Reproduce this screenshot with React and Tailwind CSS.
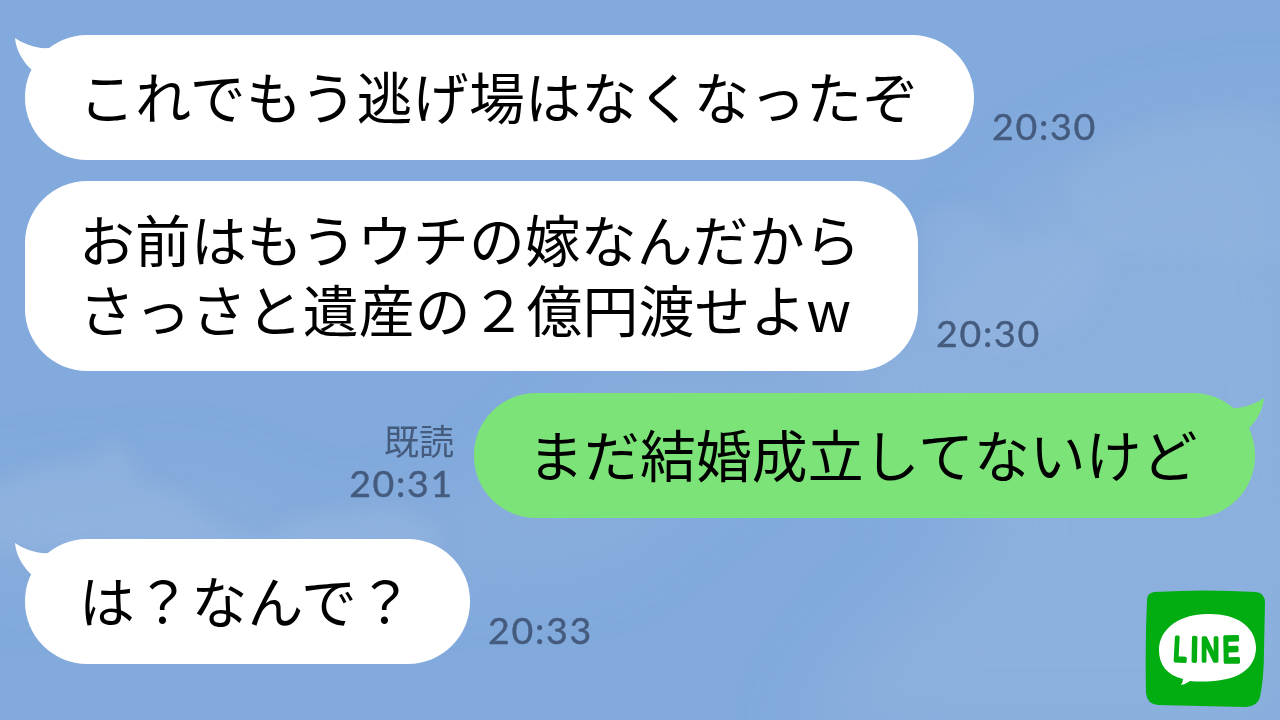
import React from 'react';
import clsx from 'clsx';

const messages = [
  { lines: ['これでもう逃げ場はなくなったぞ'], time: '20:30', tail: 'top-[3px]', width: 'w-[949px]', height: 'h-[125px]', timePad: 'pb-[15px]', tracking: 'tracking-[0.4px]' },
  { lines: ['お前はもうウチの嫁なんだから', 'さっさと遺産の２億円渡せよw'], time: '20:30', width: 'w-[893px]', height: 'h-[190px]', timePad: 'pb-[19px]', tracking: 'tracking-[0.15px]' },
  { lines: ['まだ結婚成立してないけど'], time: '20:31', mine: true, read: true, tail: 'top-[5px]', width: 'w-[781px]', height: 'h-[125px]', timePad: 'pb-[16px]', offset: 'mt-px', tracking: 'tracking-[0.15px]' },
  { lines: ['は？なんで？'], time: '20:33', tail: 'top-[4px]', width: 'w-[445px]', height: 'h-[125px]', timePad: 'pb-[15px]', tracking: 'tracking-[0.4px]' },
];

const Sky = () => (
  <svg className="absolute inset-0 w-full h-full" viewBox="0 0 1280 720" preserveAspectRatio="none">
    <defs>
      <filter id="soft" x="-20%" y="-20%" width="140%" height="140%">
        <feGaussianBlur stdDeviation="9" />
      </filter>
      <filter id="softer" x="-30%" y="-30%" width="160%" height="160%">
        <feGaussianBlur stdDeviation="36" />
      </filter>
    </defs>
    <rect width="1280" height="720" fill="#82aadc" />
    <g fill="#92b3de" filter="url(#softer)">
      <path d="M1030 190 L1140 130 L1300 110 L1320 560 L1300 740 L800 740 L860 650 L1000 520 L780 380 L930 300 Z" opacity=".65" />
      <path d="M-40 500 L200 480 L330 540 L480 500 L620 380 L840 380 L600 560 L300 580 L-40 570 Z" opacity=".45" />
    </g>
    <g fill="#98b8e1" filter="url(#soft)">
      <path d="M-20 492 L30 470 L65 462 L95 458 L112 438 L130 458 L140 482 L185 496 L215 524 L260 540 L300 516 L350 508 L400 506 L440 530 L440 556 L-20 550 Z" opacity=".45" />
      <path d="M920 215 L955 204 L985 212 L1010 244 L1060 235 L1110 262 L1080 320 L1010 350 L930 330 Z" opacity=".35" />
      <path d="M1060 180 L1110 140 L1160 120 L1230 110 L1300 120 L1300 260 L1100 250 Z" opacity=".2" />
    </g>
  </svg>
);

const Tail = ({ mine, top }) => (
  <svg
    className={clsx('absolute w-[36px] h-[36px]', top, mine ? '-right-[9px] -scale-x-100' : '-left-[10px]')}
    viewBox="0 0 36 36"
  >
    <path d="M0 0 C9 6 21 11 34 10 L34 28 L17 32 C9 25 1 13 0 0 Z" fill={mine ? '#7be378' : '#ffffff'} />
  </svg>
);

const Message = ({ lines, time, tail, mine, read, width, height, timePad, tracking, offset }) => (
  <div className={clsx('flex items-end gap-[18px]', mine && 'flex-row-reverse', offset)}>
    <div
      className={clsx(
        'relative shrink-0 flex flex-col justify-center rounded-[62px] pl-[54px] pb-[6px]',
        mine ? 'bg-[#7be378]' : 'bg-white',
        width,
        height
      )}
    >
      {tail && <Tail mine={mine} top={tail} />}
      {lines.map((line) => (
        <p key={line} className={clsx('relative whitespace-nowrap text-[55.8px] leading-[70px] font-normal text-black', tracking)}>{line}</p>
      ))}
    </div>
    <div className={clsx('flex flex-col text-[#455b7e]', mine ? 'items-end pr-[2px]' : 'items-start', timePad)}>
      {read && <span className="text-[35px] leading-[49px] font-normal">既読</span>}
      <span className="font-['Lato',sans-serif] text-[37.5px] leading-[38px] tracking-[1.7px] [-webkit-text-stroke:0.4px_#455b7e]">{time}</span>
    </div>
  </div>
);

const LineLogo = () => (
  <svg className="absolute left-[1145px] top-[590px] w-[122px] h-[118px]" viewBox="0 0 122 118">
    <path
      d="M9 2 Q60 -1 111 2 Q120 3 120 13 L119 60 Q119 88 115 107 Q113 116 101 117 Q55 116 13 115 Q2 114 1 103 Q0 55 2 10 Q2 3 9 2 Z"
      fill="#02ad12"
    />
    <path
      d="M62 24 C88 23 110 34 111 57 C111 79 93 89 69 91 Q54 92 45 91 Q41 94 36 95 Q38 92 38 89 C22 85 14 75 14 60 C14 38 36 24 62 24 Z"
      fill="#ffffff"
    />
    <g
      className="font-['Liberation_Sans',sans-serif]"
      fill="#02ad12"
      stroke="#02ad12"
      strokeWidth="3.6"
      strokeLinejoin="round"
      fontSize="34"
    >
      <text transform="translate(28 70.5) rotate(3) scale(.7 1)">L</text>
      <text transform="translate(45.5 71) rotate(1) scale(.8 1)">I</text>
      <text transform="translate(56 71) scale(.74 1)">N</text>
      <text transform="translate(78 72) rotate(-1) scale(.74 1.06)">E</text>
    </g>
  </svg>
);

const App = () => (
  <div className="relative w-[1280px] h-[720px] overflow-hidden bg-[#82aadc] font-['Noto_Sans_CJK_JP',sans-serif]">
    <Sky />
    <main className="relative flex flex-col gap-[21px] pt-[35px] pl-[25px] pr-[25px]">
      {messages.map((message, i) => (
        <Message key={i} {...message} />
      ))}
    </main>
    <LineLogo />
  </div>
);

export default App;
